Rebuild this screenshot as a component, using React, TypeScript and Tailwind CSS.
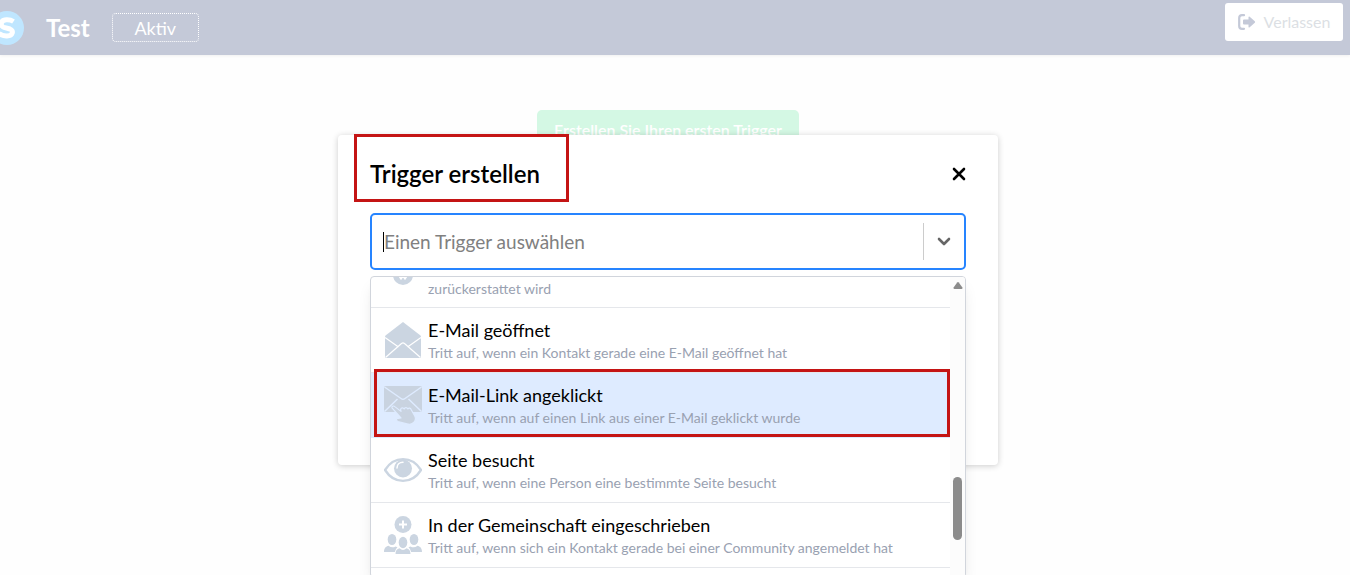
import type { ReactNode } from 'react';

interface TriggerOption {
  id: string;
  title: string;
  description: string;
  icon: ReactNode;
  active?: boolean;
}

function RefundIcon() {
  return (
    <svg viewBox="0 0 38 38" className="h-[38px] w-[38px]" fill="#cbd5e1">
      <circle cx="19" cy="28" r="10" />
      <path d="M15 28.500l2 3 2-3 2 3 2-3" fill="none" stroke="#fff" strokeWidth="2" />
    </svg>
  );
}

function OpenMailIcon() {
  return (
    <svg viewBox="0 0 38 38" className="h-[38px] w-[38px]">
      <path d="M19 1L36.500 14.500Q37 15 37 16V37H1V16Q1 15 1.500 14.500Z" fill="#cbd5e1" />
      <path d="M1 16.500L14.500 26M37 16.500L23.500 26M1.500 36.500L17.500 22.500Q19 21.200 20.500 22.500L36.500 36.500" fill="none" stroke="#fff" strokeWidth="1.200" />
    </svg>
  );
}

function MailClickIcon() {
  return (
    <svg viewBox="0 0 38 38" className="h-[38px] w-[38px]">
      <rect y="0" width="38" height="26" rx="1.500" fill="#c9d3e0" />
      <path d="M0.500 1L17 12.500Q19 14 21 12.500L37.500 1M0.500 25.500L13.500 13M37.500 25.500L24.500 13" fill="none" stroke="#deebff" strokeWidth="1.500" />
      <path
        d="M8.200 22.200C7.200 20.700 9.300 19.200 10.800 20.600L17 25.400L16.600 23.200C17.200 21.300 19.500 21.500 20.200 23C20.700 21.200 23 21.100 23.900 23C24.900 21.500 26.700 22 27.400 24L31 30.500C31.700 32.500 31.800 34.500 30 36.200C28.600 38 25.800 38.600 23 37.900L14 35.500C11.800 34.500 11.600 32.500 14 32.300L17 32Z"
        fill="#c9d3e0"
        stroke="#deebff"
        strokeWidth="1.200"
        strokeLinejoin="round"
      />
    </svg>
  );
}

function EyeIcon() {
  return (
    <svg viewBox="0 0 38 38" className="h-[38px] w-[38px]">
      <path d="M1 19C10 4.500 28 4.500 37 19C28 33.500 10 33.500 1 19Z" fill="none" stroke="#cbd5e1" strokeWidth="2.400" strokeLinejoin="round" />
      <circle cx="19" cy="17.500" r="9" fill="#cbd5e1" />
      <path d="M13 17C13 13.500 15.500 11.200 19 11.200" fill="none" stroke="#fff" strokeWidth="1.500" strokeLinecap="round" />
    </svg>
  );
}

function CommunityIcon() {
  return (
    <svg viewBox="0 0 38 38" className="h-[38px] w-[38px]" fill="#cbd5e1">
      <circle cx="19" cy="8.500" r="8.500" />
      <path d="M19 4.500V12.500M15 8.500H23" stroke="#fff" strokeWidth="2" />
      <ellipse cx="8" cy="23.500" rx="4.300" ry="5.500" />
      <ellipse cx="30" cy="23.500" rx="4.300" ry="5.500" />
      <ellipse cx="19" cy="26.500" rx="4.300" ry="5.700" />
      <path d="M0 36C0 32 2 30.500 4.500 29.800Q8 32.500 11.500 30.500L13.500 31.300Q11.500 33 10.800 36Z" />
      <path d="M38 36C38 32 36 30.500 33.500 29.800Q30 32.500 26.500 30.500L24.500 31.300Q26.500 33 27.200 36Z" />
      <path d="M11.500 38C11.500 34.500 13 33 15.500 32.300Q19 35.500 22.500 32.300C25 33 26.500 34.500 26.500 38Z" />
    </svg>
  );
}

const options: TriggerOption[] = [
  {
    id: 'opened',
    title: 'E-Mail geöffnet',
    description: 'Tritt auf, wenn ein Kontakt gerade eine E-Mail geöffnet hat',
    icon: <OpenMailIcon />,
  },
  {
    id: 'clicked',
    title: 'E-Mail-Link angeklickt',
    description: 'Tritt auf, wenn auf einen Link aus einer E-Mail geklickt wurde',
    icon: <MailClickIcon />,
    active: true,
  },
  {
    id: 'visited',
    title: 'Seite besucht',
    description: 'Tritt auf, wenn eine Person eine bestimmte Seite besucht',
    icon: <EyeIcon />,
  },
  {
    id: 'community',
    title: 'In der Gemeinschaft eingeschrieben',
    description: 'Tritt auf, wenn sich ein Kontakt gerade bei einer Community angemeldet hat',
    icon: <CommunityIcon />,
  },
];

function Option({ option }: { option: TriggerOption }) {
  return (
    <li
      role="option"
      aria-selected={!!option.active}
      className={`relative flex h-[65px] shrink-0 items-center gap-1.5 border-b pl-[13px] ${
        option.active ? 'border-[#deebff] bg-[#deebff]' : 'border-gray-200'
      }`}
    >
      {option.icon}
      <div>
        <div className="text-[18px] leading-[26px] text-black">{option.title}</div>
        <div className="text-[14px] leading-5 text-[#99a1b1]">{option.description}</div>
      </div>
      {/* Highlight frame */}
      {option.active && <div className="absolute -top-1 right-0 bottom-0 left-[3px] border-3 border-[#c41414]" />}
    </li>
  );
}

function TriggerMenu() {
  return (
    <div className="absolute top-full right-0 left-0 mt-1.5 flex h-[302px] overflow-hidden rounded border border-gray-300 bg-white shadow-lg">
      <ul id="trigger-list" role="listbox" aria-label="Trigger" className="flex min-w-0 flex-1 flex-col">
        <li role="option" aria-selected={false} className="flex h-[31px] shrink-0 items-end gap-1.5 overflow-hidden border-b border-gray-200 pl-[13px]">
          <div className="mb-[22px]">
            <RefundIcon />
          </div>
          <div className="mb-2 text-[14px] leading-5 text-[#99a1b1]">zurückerstattet wird</div>
        </li>
        {options.map(o => (
          <Option key={o.id} option={o} />
        ))}
      </ul>
      {/* Scrollbar */}
      <div className="flex w-[15px] flex-col items-center bg-[#fcfcfc] pt-1">
        <svg viewBox="0 0 10 9" className="h-[9px] w-[10px]" fill="#8b8b8b">
          <path d="M4.200 1.500Q5 0.600 5.800 1.500L9.400 6.500Q9.800 8 8.500 8H1.500Q0.200 8 0.600 6.500Z" />
        </svg>
        <div className="mt-[187px] h-[63px] w-[9px] rounded-full bg-[#8b8b8b]" />
      </div>
    </div>
  );
}

function TopBar() {
  return (
    <header className="flex h-[55px] items-center bg-[#c4c9d8] pr-[7px] text-white shadow-[0_1px_3px_rgba(0,0,0,0.06)]">
      <svg viewBox="0 0 24 34" className="h-[34px] w-6">
        <circle cx="7" cy="17" r="17" fill="#bfe6ff" />
        <path d="M13.500 10.500Q10.500 8.600 6.500 8.800C0 9 0 15.200 4 16.400L10 18C14 19.500 13 24.800 7 25Q2.500 25.200 -1 22.500" fill="none" stroke="#fff" strokeWidth="5" />
      </svg>
      <h1 className="ml-[22px] text-[24px] leading-8 font-bold">Test</h1>
      <button className="ml-[22px] h-[29px] w-[87px] rounded-sm border border-dotted border-white text-[18px] leading-6">
        Aktiv
      </button>
      <button className="mb-[11px] ml-auto flex h-[38px] w-[118px] items-center justify-center gap-2 rounded-[3px] bg-white text-[16px] text-[#dcdfe4]">
        <svg viewBox="0 0 18 16" className="h-4 w-[18px]" fill="#c4c9d8">
          <path d="M6 1.200H4Q1.200 1.200 1.200 4V12Q1.200 14.800 4 14.800H6" fill="none" stroke="#c4c9d8" strokeWidth="2.200" strokeLinecap="round" />
          <path d="M6 5.500H10.500V3Q10.800 2 11.700 2.700L16.800 7.300Q17.500 8 16.800 8.700L11.700 13.300Q10.800 14 10.500 13V10.500H6Q5 10.500 5 9.500V6.500Q5 5.500 6 5.500Z" />
        </svg>
        Verlassen
      </button>
    </header>
  );
}

function TriggerDialog() {
  return (
    <section
      role="dialog"
      aria-labelledby="dialog-title"
      className="relative -mt-[15px] h-[330px] w-full max-w-[660px] rounded bg-white px-8 shadow-[0_1px_6px_rgba(0,0,0,0.2)]"
    >
      <div className="flex h-[78px] items-center justify-between">
        <h2 id="dialog-title" className="relative text-[24px] leading-8 font-semibold text-black">
          Trigger erstellen
          <span className="absolute -top-6 -right-[29px] -bottom-3 -left-4 border-3 border-[#c41414]" />
        </h2>
        <button aria-label="Schließen">
          <svg viewBox="0 0 14 14" className="h-[14px] w-[14px]" fill="none" stroke="#000" strokeWidth="2.600" strokeLinecap="round">
            <path d="M2 2L12 12M12 2L2 12" />
          </svg>
        </button>
      </div>

      <div className="relative">
        <div className="flex h-[57px] items-center rounded-[5px] border-2 border-[#2684ff] pl-[11px]">
          <span className="h-5 w-px bg-black" />
          <input
            role="combobox"
            aria-label="Einen Trigger auswählen"
            aria-expanded="true"
            aria-controls="trigger-list"
            placeholder="Einen Trigger auswählen"
            className="min-w-0 flex-1 bg-transparent text-[19px] leading-6 outline-none placeholder:text-[#808080]"
          />
          <span className="h-[37px] w-px bg-[#cccccc]" />
          <button aria-label="Liste öffnen" className="flex w-10 justify-center">
            <svg viewBox="0 0 14 9" className="h-[9px] w-[14px]" fill="none" stroke="#666" strokeWidth="2.600" strokeLinecap="round" strokeLinejoin="round">
              <path d="M2 2L7 7L12 2" />
            </svg>
          </button>
        </div>
        <TriggerMenu />
      </div>
    </section>
  );
}

export default function App() {
  return (
    <div className="h-screen overflow-hidden bg-[#fefefe] font-['Lato',sans-serif]">
      <TopBar />
      <main className="flex flex-col items-center pt-[55px] pr-[14px]">
        <button className="h-10 w-[262px] rounded-[5px] bg-[#d4f8e4] text-[16px] font-semibold text-white">
          Erstellen Sie Ihren ersten Trigger
        </button>
        <TriggerDialog />
      </main>
    </div>
  );
}
